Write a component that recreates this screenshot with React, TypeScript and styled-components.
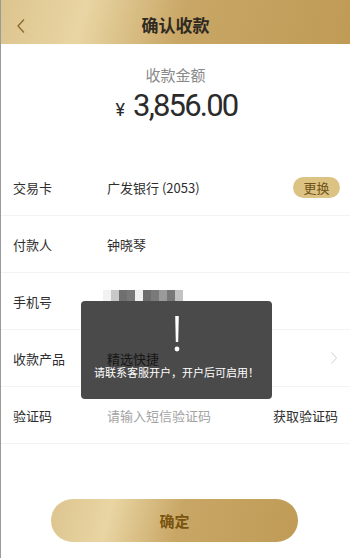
import React from 'react';
import styled, { createGlobalStyle } from 'styled-components';

const GlobalStyle = createGlobalStyle`
	html, body {
		margin: 0;
		padding: 0;
		background: #fff;
	}
	body {
		font-family: 'Noto Sans CJK SC', 'Noto Sans', sans-serif;
		color: #333;
	}
`;

const gold = 'linear-gradient(105deg, #dcc48e 0%, #e9d5a3 24%, #c8a665 52%, #bf9b56 100%)';

const mosaic = ['#f2f2f2', '#c8c8c8', '#707070', '#787878', '#f0f0f0', '#6c6c6c', '#7a7a7a', '#9a9a9a', '#777', '#c2c2c2'];

const App: React.FunctionComponent = () => {
	return (
		<Page>
			<GlobalStyle />
			<Header>
				<BackButton>
					<svg width='10' height='16' viewBox='0 0 10 16'>
						<polyline points='8,1.5 2,8 8,14.5' fill='none' stroke='#8b6a2c' strokeWidth='1.3' />
					</svg>
				</BackButton>
				<Title>确认收款</Title>
			</Header>

			<AmountBlock>
				<AmountLabel>收款金额</AmountLabel>
				<Amount>
					<Currency>¥</Currency>3,856.00
				</Amount>
			</AmountBlock>

			<List>
				<Row>
					<Label>交易卡</Label>
					<Value>广发银行 (2053)</Value>
					<SwapButton>更换</SwapButton>
				</Row>
				<Row>
					<Label>付款人</Label>
					<Value>钟晓琴</Value>
				</Row>
				<Row>
					<Label>手机号</Label>
					<Mosaic>
						{mosaic.map((c, i) => (
							<Tile key={i} style={{ background: c }} />
						))}
					</Mosaic>
				</Row>
				<Row>
					<Label>收款产品</Label>
					<Value $raised>精选快捷</Value>
					<svg width='8' height='14' viewBox='0 0 8 14'>
						<polyline points='1.5,1.5 6.5,7 1.5,12.5' fill='none' stroke='#cfcfcf' strokeWidth='1' />
					</svg>
				</Row>
				<Row>
					<Label>验证码</Label>
					<Placeholder>请输入短信验证码</Placeholder>
					<CodeLink>获取验证码</CodeLink>
				</Row>
			</List>

			<Footer>
				<Confirm>确定</Confirm>
			</Footer>

			<Toast>
				<Bang>
					<svg width='8' height='38' viewBox='0 0 8 38'>
						<path d='M2.2 1 H5.8 L5.2 27 H2.8 Z' fill='#fff' />
						<circle cx='4' cy='34' r='2.4' fill='#fff' />
					</svg>
				</Bang>
				<ToastText>请联系客服开户，开户后可启用！</ToastText>
			</Toast>
		</Page>
	);
};

const Page = styled.div`
	position: relative;
	width: 350px;
	height: 558px;
	box-sizing: border-box;
	border-left: 1px solid #9a9a9a;
	display: flex;
	flex-direction: column;
	overflow: hidden;
`;
const Header = styled.div`
	height: 44px;
	background: ${gold};
	display: flex;
	align-items: center;
	justify-content: center;
	position: relative;
`;
const BackButton = styled.div`
	position: absolute;
	left: 15px;
	top: 18px;
	display: flex;
`;
const Title = styled.div`
	font-size: 17px;
	font-weight: 700;
	color: #2f2a22;
	margin-top: 5px;
`;
const AmountBlock = styled.div`
	height: 115px;
	display: flex;
	flex-direction: column;
	align-items: center;
	padding-top: 20px;
	box-sizing: border-box;
`;
const AmountLabel = styled.div`
	font-size: 15px;
	color: #8a8a8a;
	line-height: 22px;
`;
const Amount = styled.div`
	font-family: Roboto, 'Noto Sans', sans-serif;
	font-size: 31px;
	line-height: 40px;
	color: #2b2b2b;
	letter-spacing: -1.8px;
	margin-left: 2px;
`;
const Currency = styled.span`
	font-size: 18px;
	letter-spacing: 0;
	margin-right: 8px;
`;
const List = styled.div`
	display: flex;
	flex-direction: column;
`;
const Row = styled.div`
	height: 56px;
	display: flex;
	align-items: center;
	padding: 0 12px 0 12px;
	border-bottom: 1px solid #f3f3f3;
	font-size: 13px;
`;
const Label = styled.div`
	width: 94px;
	color: #2e2e2e;
`;
const Value = styled.div<{ $raised?: boolean }>`
	flex: 1;
	color: ${(p) => (p.$raised ? '#161616' : '#2e2e2e')};
	position: ${(p) => (p.$raised ? 'relative' : 'static')};
	z-index: ${(p) => (p.$raised ? 3 : 'auto')};
`;
const SwapButton = styled.div`
	width: 47px;
	height: 21px;
	border-radius: 11px;
	background: #dcc283;
	color: #6f5218;
	font-size: 13px;
	display: flex;
	align-items: center;
	justify-content: center;
	margin-right: -2px;
`;
const Mosaic = styled.div`
	display: flex;
	margin-left: -4px;
	margin-top: -8px;
`;
const Tile = styled.div`
	width: 8px;
	height: 14px;
`;
const Placeholder = styled.div`
	flex: 1;
	color: #a3a3a3;
`;
const CodeLink = styled.div`
	color: #2e2e2e;
	font-size: 13px;
`;
const Footer = styled.div`
	flex: 1;
	display: flex;
	justify-content: center;
	padding-top: 55px;
	padding-right: 2px;
`;
const Confirm = styled.div`
	width: 247px;
	height: 43px;
	border-radius: 22px;
	background: ${gold};
	color: #7a5510;
	font-size: 15px;
	font-weight: 700;
	display: flex;
	align-items: center;
	justify-content: center;
`;
const Toast = styled.div`
	position: absolute;
	left: 80px;
	top: 301px;
	width: 191px;
	height: 98px;
	border-radius: 4px;
	background: #4a4a4a;
	z-index: 2;
	display: flex;
	flex-direction: column;
	align-items: center;
`;
const Bang = styled.div`
	display: flex;
	margin-top: 14px;
`;
const ToastText = styled.div`
	font-size: 11px;
	color: #fff;
	margin-top: 11px;
`;

export default App;
